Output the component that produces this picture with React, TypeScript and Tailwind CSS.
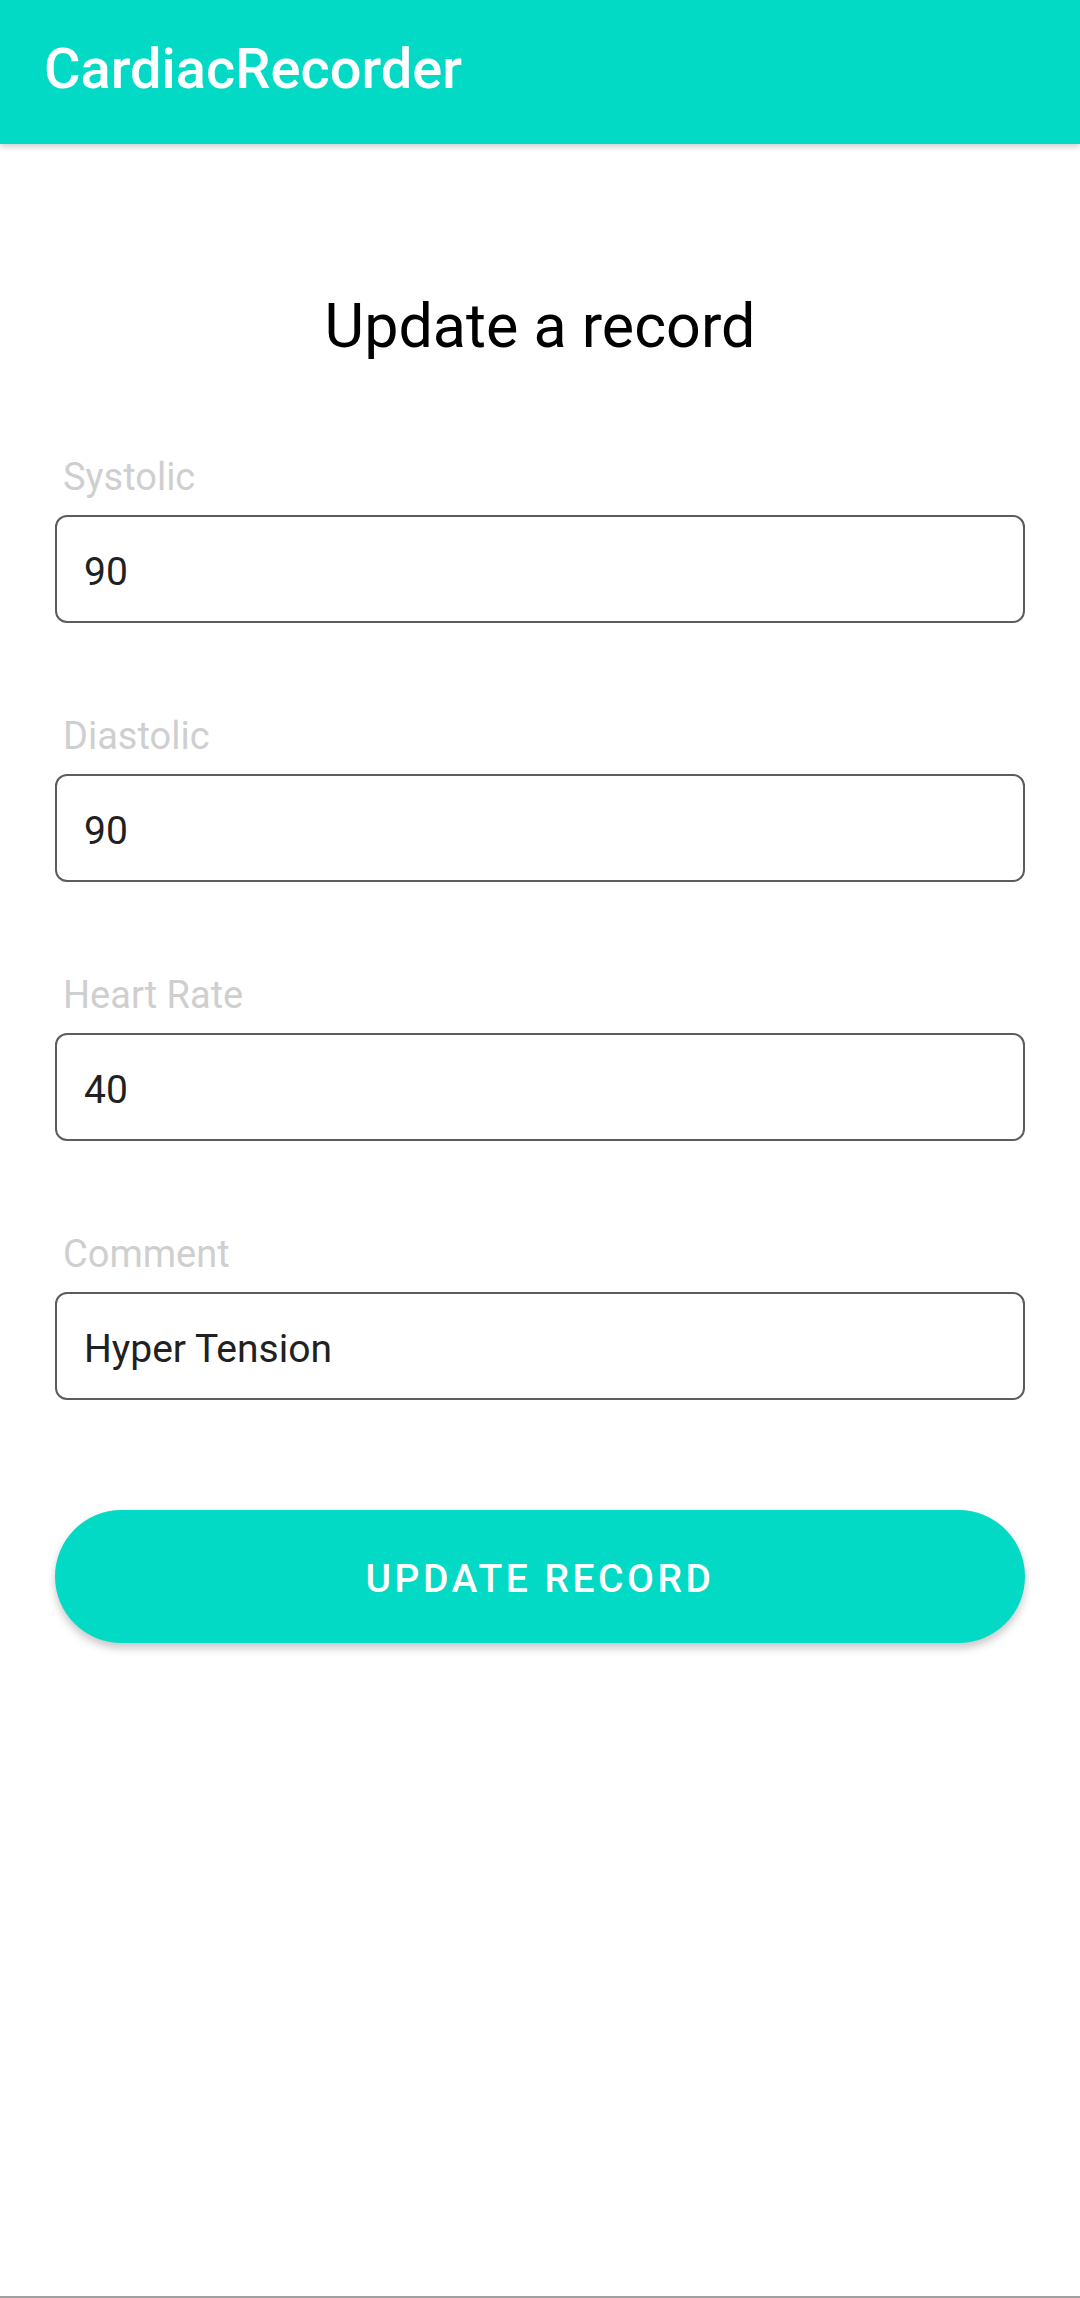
const fields = [
  { label: 'Systolic', value: '90' },
  { label: 'Diastolic', value: '90' },
  { label: 'Heart Rate', value: '40' },
  { label: 'Comment', value: 'Hyper Tension' },
];

function Field({ label, value }: { label: string; value: string }) {
  return (
    <div className="flex flex-col">
      <div className="pl-[8px] text-[38px] leading-[46px] text-[#cfcfcf]">{label}</div>
      <div className="mt-[15px] flex h-[108px] items-center rounded-[12px] border-2 border-[#5c5c5c] pl-[27px] pt-[5px] text-[39px] leading-[46px] text-[#212121]">
        {value}
      </div>
    </div>
  );
}

export default function App() {
  return (
    <div className="flex h-[2298px] flex-col bg-white font-['Roboto',sans-serif]">
      <header className="relative z-10 flex h-[144px] items-center bg-[#03DAC5] pl-[44px] shadow-[0_3px_6px_rgba(0,0,0,0.18)]">
        <h1 className="pb-[6px] text-[56px] font-medium leading-[64px] text-white">CardiacRecorder</h1>
      </header>

      <main className="flex flex-1 flex-col px-[55px] pt-[145px]">
        <h2 className="text-center text-[61px] leading-[74px] text-black">Update a record</h2>

        <div className="mt-[91px] flex flex-col gap-[90px]">
          {fields.map((f) => (
            <Field key={f.label} label={f.label} value={f.value} />
          ))}
        </div>

        <button className="mt-[110px] h-[133px] w-full rounded-full bg-[#03DAC5] pt-[5px] text-[39px] font-medium tracking-[3.5px] text-white shadow-[0_5px_8px_rgba(0,0,0,0.22)]">
          UPDATE RECORD
        </button>
      </main>

      <div className="h-[2px] bg-[#a0a0a0]" />
    </div>
  );
}
